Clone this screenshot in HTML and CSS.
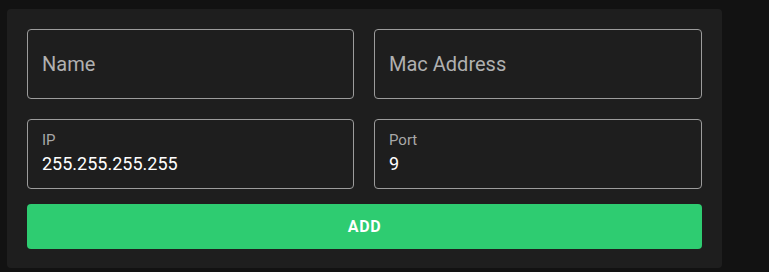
FILE: index.html
```html
<!DOCTYPE html>
<html>
<head>
<meta charset="utf-8">
<link rel="stylesheet" href="styles.css">
</head>
<body>
<div class="card">
  <div class="grid">
    <div class="field"><span class="placeholder">Name</span></div>
    <div class="field"><span class="placeholder">Mac Address</span></div>
    <div class="field filled"><span class="label">IP</span><span class="value">255.255.255.255</span></div>
    <div class="field filled"><span class="label">Port</span><span class="value">9</span></div>
  </div>
  <button class="add">ADD</button>
</div>
</body>
</html>
```
FILE: styles.css
```css
html, body {
  margin: 0;
  background: #121212;
}
body {
  padding: 9px 0 0 7px;
  font-family: Roboto, "Liberation Sans", sans-serif;
}
.card {
  width: 715px;
  box-sizing: border-box;
  background: #1e1e1e;
  border-radius: 4px;
  padding: 20px 20px 19px 20px;
}
.grid {
  display: grid;
  grid-template-columns: 327px 328px;
  column-gap: 20px;
  row-gap: 20px;
}
.field {
  height: 70px;
  box-sizing: border-box;
  border: 1px solid #9c9c9c;
  border-radius: 4px;
  padding-left: 14px;
  display: flex;
  align-items: center;
}
.placeholder {
  font-size: 20px;
  color: #b0b0b0;
  margin-top: -1px;
}
.field.filled {
  flex-direction: column;
  align-items: flex-start;
  justify-content: flex-start;
  padding-top: 11px;
}
.label {
  font-size: 15px;
  line-height: 18px;
  color: #a8a8a8;
}
.value {
  margin-top: 4px;
  font-size: 18px;
  line-height: 22px;
  color: #ffffff;
}
.add {
  display: block;
  width: 100%;
  margin-top: 15px;
  height: 45px;
  border: none;
  border-radius: 4px;
  background: #2ecc71;
  color: #ffffff;
  font-family: Roboto, "Liberation Sans", sans-serif;
  font-weight: 700;
  font-size: 16px;
  letter-spacing: 0.6px;
  padding: 0;
}
```
